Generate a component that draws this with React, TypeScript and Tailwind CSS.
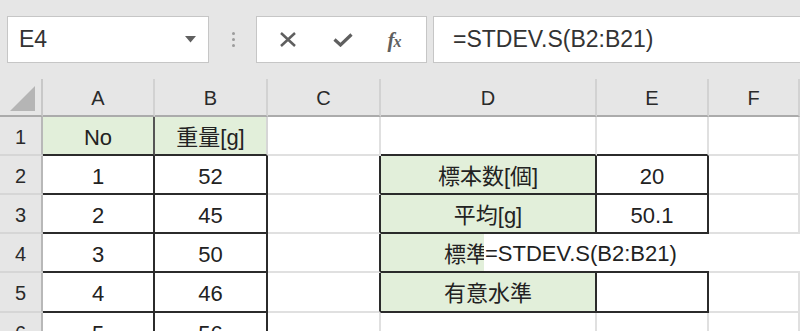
import React from "react";

type Cell = { text?: string; green?: boolean };

const FONT = "font-['Liberation_Sans','Noto_Sans_CJK_JP',sans-serif]";

const colLetters = ["A", "B", "C", "D", "E", "F"];

// rows 1..6, columns A..F
const data: Cell[][] = [
  [{ text: "No", green: true }, { text: "重量[g]", green: true }, {}, {}, {}, {}],
  [{ text: "1" }, { text: "52" }, {}, { text: "標本数[個]", green: true }, { text: "20" }, {}],
  [{ text: "2" }, { text: "45" }, {}, { text: "平均[g]", green: true }, { text: "50.1" }, {}],
  [{ text: "3" }, { text: "50" }, {}, { text: "標準偏差", green: true }, {}, {}],
  [{ text: "4" }, { text: "46" }, {}, { text: "有意水準", green: true }, {}, {}],
  [{ text: "5" }, { text: "56" }, {}, {}, {}, {}],
];

// cells with black borders: A1:B6 and D2:E5
const boxed = (r: number, c: number) =>
  (c >= 0 && c <= 1 && r >= 0 && r <= 5) || (c >= 3 && c <= 4 && r >= 1 && r <= 4);

const Toolbar = () => (
  <div className="h-[79px] bg-[#e6e6e6] flex items-start pt-[16px] pl-[7px]">
    <div className="w-[202px] h-[47px] bg-white border border-[#c6c6c6] flex items-center justify-between pl-[11px] pr-[12px]">
      <span className={`${FONT} text-[23px] text-[#333] leading-none`}>E4</span>
      <svg width="11" height="7" viewBox="0 0 11 7">
        <path d="M0 0 L11 0 L5.5 6.5 Z" fill="#606060" />
      </svg>
    </div>
    <div className="w-[47px] h-[47px] flex flex-col items-center justify-center gap-[3px] pl-[1px]">
      <span className="w-[3px] h-[3px] rounded-full bg-[#9c9c9c]" />
      <span className="w-[3px] h-[3px] rounded-full bg-[#9c9c9c]" />
      <span className="w-[3px] h-[3px] rounded-full bg-[#9c9c9c]" />
    </div>
    <div className="w-[171px] h-[47px] bg-white border border-[#c6c6c6] flex items-center">
      <div className="w-[60px] flex justify-center pl-[2px]">
        <svg width="18" height="15" viewBox="0 0 18 15">
          <path d="M2 1 L16 14 M16 1 L2 14" stroke="#5f5f5f" strokeWidth="2.5" />
        </svg>
      </div>
      <div className="w-[52px] flex justify-center">
        <svg width="20" height="14" viewBox="0 0 20 14">
          <path d="M1.5 6.5 L7.5 12 L18.5 1.5" stroke="#5f5f5f" strokeWidth="3.2" fill="none" />
        </svg>
      </div>
      <div className="w-[50px] flex justify-center pt-[2px]">
        <span className="font-['Liberation_Serif',serif] italic font-bold text-[21px] text-[#5f5f5f] leading-none tracking-[-1px]">
          f<span className="text-[16px]">x</span>
        </span>
      </div>
    </div>
    <div className="ml-[6px] flex-1 -mr-[10px] h-[47px] bg-white border border-[#c6c6c6] flex items-center pl-[19px]">
      <span className={`${FONT} text-[23px] text-[#333] leading-none`}>=STDEV.S(B2:B21)</span>
    </div>
  </div>
);

export default function App() {
  return (
    <div className="w-[800px] h-[331px] overflow-hidden bg-white">
      <Toolbar />
      <div className="relative">
        <div className="grid grid-cols-[43px_112px_113px_113px_216px_112px_91px] grid-rows-[38px_39px_39px_39px_39px_40px_39px]">
          {/* header row */}
          <div className="bg-[#e6e6e6] border-r-2 border-b-2 border-r-[#c8c8c8] border-b-[#ababab] flex items-end justify-end pr-[6px] pb-[4px]">
            <svg width="25" height="25" viewBox="0 0 25 25">
              <path d="M25 0 L25 25 L0 25 Z" fill="#b5b5b5" />
            </svg>
          </div>
          {colLetters.map((l) => (
            <div
              key={l}
              className={`bg-[#e6e6e6] border-r-2 border-b-2 border-r-[#d2d2d2] border-b-[#ababab] flex items-center justify-center pt-[2px] ${FONT} text-[20px] text-[#2a2a2a]`}
            >
              {l}
            </div>
          ))}
          {data.map((row, r) => (
            <React.Fragment key={r}>
              <div
                className={`bg-[#e6e6e6] border-r-2 border-b-2 border-r-[#b8b8b8] border-b-[#d6d6d6] flex items-center justify-center pt-[2px] ${FONT} text-[20px] text-[#2a2a2a]`}
              >
                {r + 1}
              </div>
              {row.map((cell, c) => {
                const right =
                  r === 0 && c === 1
                    ? "border-r-[#d6d6d6]"
                    : r === 0 && c === 0
                    ? "border-r-[#555]"
                    : boxed(r, c) || boxed(r, c + 1)
                    ? "border-r-[#2b2b2b]"
                    : "border-r-[#e0e0e0]";
                const bottom =
                  boxed(r, c) || boxed(r + 1, c) ? "border-b-[#2b2b2b]" : "border-b-[#e0e0e0]";
                return (
                  <div
                    key={c}
                    className={`border-r-2 border-b-2 ${right} ${bottom} ${
                      cell.green ? "bg-[#e2efda]" : "bg-white"
                    } flex items-center justify-center pt-[3px] overflow-hidden whitespace-nowrap ${FONT} text-[22px] text-[#222]`}
                  >
                    {cell.text}
                  </div>
                );
              })}
            </React.Fragment>
          ))}
        </div>
        {/* in-cell editor for E4 */}
        <div className="absolute left-[484px] top-[155px] w-[320px] h-[37px] bg-white flex items-center pl-[1px] pt-[3px]">
          <span className={`${FONT} text-[22px] text-[#222] leading-none`}>=STDEV.S(B2:B21)</span>
        </div>
      </div>
    </div>
  );
}
